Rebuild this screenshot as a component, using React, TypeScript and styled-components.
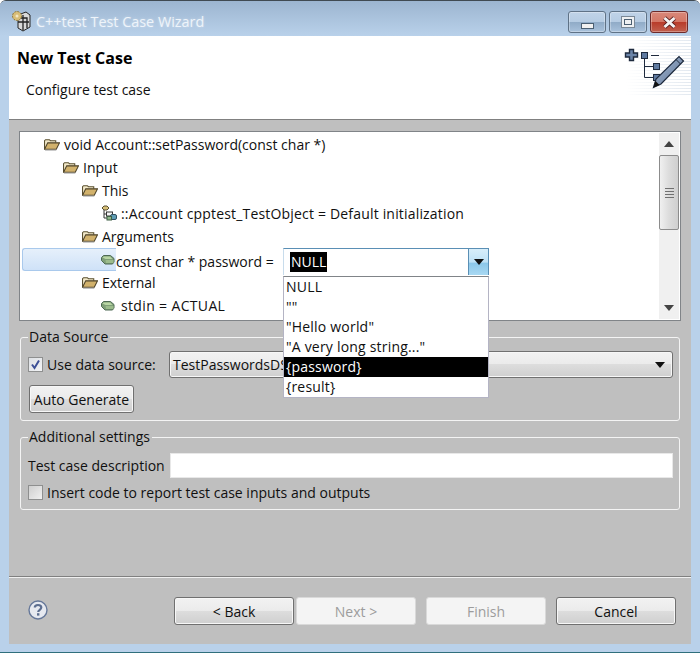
import styled, { createGlobalStyle } from "styled-components";

const GlobalStyle = createGlobalStyle`
  html, body {
    margin: 0;
    padding: 0;
    background: #fff;
  }
  * {
    box-sizing: border-box;
  }
`;

const font = `"Open Sans", "Noto Sans", sans-serif`;

const Window = styled.div`
  width: 700px;
  height: 653px;
  display: flex;
  flex-direction: column;
  background: #b9d1ea;
  border-top: 1px solid #404a52;
  border-bottom: 1px solid #2f6f7c;
  border-radius: 6px 6px 0 0;
  font-family: ${font};
  font-size: 14px;
  color: #101010;
  overflow: hidden;
`;

const TitleBar = styled.div`
  height: 35px;
  flex: none;
  display: flex;
  align-items: center;
  padding: 5px 12px 0 11px;
  gap: 5px;
  background: linear-gradient(#9cb5d0, #b9d1ea);
`;

const TitleText = styled.span`
  flex: 1;
  font-size: 14.4px;
  color: #eef4fa;
  text-shadow: 0 0 3px rgba(255, 255, 255, 0.4);
`;

const WindowControls = styled.div`
  display: flex;
  gap: 3px;
  margin-top: 5px;
  align-self: flex-start;
`;

const ControlButton = styled.div<{ $close?: boolean }>`
  width: 38px;
  height: 22px;
  display: flex;
  align-items: center;
  justify-content: center;
  border: 1px solid ${(p) => (p.$close ? "#6e2a2a" : "#5f7286")};
  border-radius: 3px;
  box-shadow: inset 0 0 0 1px rgba(255, 255, 255, 0.3);
  background: ${(p) =>
    p.$close
      ? "linear-gradient(#d9887a 0%, #d47766 48%, #b93c2b 52%, #c1604e 100%)"
      : "linear-gradient(#c0d3e8 0%, #b6cce3 48%, #90abc7 52%, #a9c2dc 100%)"};
`;

const MinimizeGlyph = styled.div`
  width: 13px;
  height: 6px;
  margin-top: 7px;
  background: #f1f1f1;
  border: 1px solid #4b5f72;
`;

const MaximizeGlyph = styled.div`
  width: 14px;
  height: 12px;
  background: #eef0f2;
  border: 1px solid #7a8896;
  display: flex;
  align-items: center;
  justify-content: center;
  &::after {
    content: "";
    width: 6px;
    height: 4px;
    background: #eef0f2;
    border: 1px solid #4b5f72;
  }
`;

const Content = styled.div`
  flex: 1;
  margin: 0 9px 8px 9px;
  display: flex;
  flex-direction: column;
  background: #bfbfbf;
`;

const Header = styled.div`
  height: 84px;
  flex: none;
  display: flex;
  justify-content: space-between;
  background: #fff;
  border-bottom: 1px solid #808080;
`;

const HeaderText = styled.div`
  padding: 11px 0 0 8px;
`;

const HeaderTitle = styled.div`
  font-size: 16px;
  font-weight: 700;
  line-height: 22px;
  color: #000;
`;

const HeaderSubtitle = styled.div`
  margin: 10px 0 0 9px;
  font-size: 14px;
  line-height: 22px;
`;

const Body = styled.div`
  flex: 1;
  display: flex;
  flex-direction: column;
  padding: 11px 10px 0 10px;
`;

const TreePanel = styled.div`
  height: 190px;
  flex: none;
  display: flex;
  background: #fff;
  border: 1px solid #808488;
`;

const Tree = styled.div`
  flex: 1;
  padding-top: 1px;
`;

const TreeRow = styled.div<{ $depth: number; $tracking?: number; $gap?: number }>`
  height: 23px;
  display: flex;
  align-items: center;
  gap: ${(p) => p.$gap ?? 4}px;
  padding-left: ${(p) => 24 + p.$depth * 19}px;
  letter-spacing: ${(p) => p.$tracking ?? 0}px;
  white-space: nowrap;
`;

const EditRow = styled.div`
  height: 23px;
  display: flex;
  align-items: flex-start;
  white-space: nowrap;
`;

const SelectedCell = styled.div`
  width: 94px;
  height: 23px;
  margin-left: 2px;
  display: flex;
  justify-content: flex-end;
  align-items: flex-start;
  padding: 6px 1px 0 0;
  border: 1px solid #a9c9ec;
  border-right: 0;
  border-radius: 3px 0 0 3px;
  background: linear-gradient(#e6f0fb, #cfe2f8);
`;

const EditLabel = styled.span`
  width: 167px;
  line-height: 27px;
`;

const Combo = styled.div`
  position: relative;
  width: 206px;
  height: 27px;
  display: flex;
  align-items: center;
  justify-content: space-between;
  background: #fff;
  border-top: 1px solid #5a8fb5;
  border-left: 1px solid #c8dcec;
  border-right: 1px solid #5a8fb5;
  padding-left: 6px;
`;

const ComboValue = styled.span`
  background: #000;
  color: #fff;
  padding: 0 1px;
  line-height: 20px;
`;

const ComboArrow = styled.div`
  width: 20px;
  height: 26px;
  display: flex;
  align-items: center;
  justify-content: center;
  background: linear-gradient(#d8eefa 0%, #bfe2f6 50%, #8cc8ea 55%, #a8d8f2 100%);
  border-left: 1px solid #5a8fb5;
`;

const Popup = styled.div`
  position: absolute;
  left: -1px;
  top: 27px;
  width: 206px;
  height: 122px;
  background: #fff;
  border: 1px solid #b4b4c4;
  border-top-color: #808488;
  z-index: 5;
  letter-spacing: 0.2px;
`;

const PopupItem = styled.div<{ $selected?: boolean }>`
  height: 20px;
  line-height: 20px;
  padding-left: 2px;
  background: ${(p) => (p.$selected ? "#000" : "transparent")};
  color: ${(p) => (p.$selected ? "#fff" : "#101010")};
`;

const Scrollbar = styled.div`
  width: 20px;
  margin: 1px 1px 1px 0;
  display: flex;
  flex-direction: column;
  background: #f0f0f0;
`;

const ScrollArrow = styled.div`
  height: 22px;
  display: flex;
  align-items: center;
  justify-content: center;
`;

const ScrollThumb = styled.div`
  height: 75px;
  display: flex;
  flex-direction: column;
  gap: 2px;
  align-items: center;
  justify-content: center;
  border: 1px solid #8c8c8c;
  border-radius: 2px;
  background: linear-gradient(90deg, #f0f0f0, #dcdcdc 50%, #cfcfcf);
`;

const Grip = styled.div`
  width: 9px;
  height: 1px;
  background: #707070;
`;

const ScrollSpacer = styled.div`
  flex: 1;
`;

const Group = styled.fieldset<{ $height: number; $pad: number }>`
  margin: 7px 0 0 1px;
  width: 660px;
  height: ${(p) => p.$height}px;
  padding: ${(p) => p.$pad}px 6px 0 7px;
  border: 1px solid #f4f4f4;
  border-radius: 3px;
  min-width: 0;
`;

const GroupTitle = styled.legend`
  padding: 0 2px 0 1px;
  margin-left: 0;
  line-height: 18px;
  font-size: 14px;
`;

const FormRow = styled.div`
  display: flex;
  align-items: center;
`;

const CheckBox = styled.div<{ $checked?: boolean }>`
  width: 15px;
  height: 15px;
  flex: none;
  display: flex;
  align-items: center;
  justify-content: center;
  border: 1px solid #8e8f8f;
  background: ${(p) =>
    p.$checked ? "linear-gradient(135deg, #dde0e4, #f2f3f5)" : "linear-gradient(135deg, #cfcfcf, #f0f0f0)"};
`;

const CheckLabel = styled.span<{ $width?: number }>`
  margin-left: 4px;
  width: ${(p) => (p.$width ? `${p.$width}px` : "auto")};
`;

const DropList = styled.div`
  flex: 1;
  height: 27px;
  display: flex;
  align-items: center;
  justify-content: space-between;
  padding: 0 7px 0 3px;
  border: 1px solid #707070;
  border-radius: 3px;
  box-shadow: inset 0 0 0 1px #f7f7f7;
  background: linear-gradient(#f2f2f2 0%, #ebebeb 48%, #dddddd 50%, #cfcfcf 100%);
`;

const Button = styled.button<{ $width: number; $disabled?: boolean }>`
  width: ${(p) => p.$width}px;
  height: 28px;
  padding: 0;
  font: inherit;
  border-radius: 3px;
  color: ${(p) => (p.$disabled ? "#9c9c9c" : "#101010")};
  border: 1px solid ${(p) => (p.$disabled ? "#d9d9d9" : "#707070")};
  box-shadow: ${(p) => (p.$disabled ? "none" : "inset 0 0 0 1px #f7f7f7")};
  background: ${(p) =>
    p.$disabled
      ? "#f4f4f4"
      : "linear-gradient(#f2f2f2 0%, #ebebeb 48%, #dddddd 50%, #cfcfcf 100%)"};
`;

const AutoButtonRow = styled.div`
  margin: 7px 0 0 1px;
`;

const DescLabel = styled.span`
  width: 142px;
  flex: none;
`;

const TextField = styled.div`
  flex: 1;
  height: 25px;
  background: #fff;
  border: 1px solid #e8e8e8;
`;

const InsertRow = styled(FormRow)`
  margin-top: 5px;
`;

const Grow = styled.div`
  flex: 1;
`;

const FooterRule = styled.div`
  height: 2px;
  flex: none;
  background: #808080;
  border-bottom: 1px solid #f0f0f0;
`;

const Footer = styled.div`
  height: 66px;
  flex: none;
  display: flex;
  align-items: flex-start;
  padding: 19px 15px 0 19px;
`;

const HelpIcon = styled.svg`
  width: 20px;
  height: 20px;
  margin-top: 3px;
`;

const FooterButtons = styled.div`
  margin-left: auto;
  display: flex;
`;

const ButtonGap = styled.div<{ $width: number }>`
  width: ${(p) => p.$width}px;
`;

function Folder() {
  return (
    <svg width="16" height="14" viewBox="1 1.5 15 12">
      <path d="M1.5 11.5V3.5L2.5 2.5H6L7 3.5H12V5.5" fill="#f2e8c8" stroke="#5a5030" />
      <path d="M1.5 11.5L4.5 5.5H15.5L12.5 11.5Z" fill="#d2b26c" stroke="#4c4228" />
      <path d="M2 12.5H12.5" stroke="#b8b8b8" />
    </svg>
  );
}

function Block() {
  return (
    <svg width="14" height="10" viewBox="0 0 14 10">
      <path d="M0.5 2.5L2.5 0.5H9.5L13 3.5V7L11.5 9H4L0.5 5.5Z" fill="#7f9f78" stroke="#4e6a55" />
      <path d="M1.5 2.5L3 1.5H9L11.5 4H4.5Z" fill="#b9d6a4" />
      <path d="M4.5 5H12.5V8H5Z" fill="#9cbc8c" />
    </svg>
  );
}

function ClassIcon() {
  return (
    <svg width="17" height="17" viewBox="0 0 17 17">
      <path d="M1 3L3 1H6L8 3L6 5H3Z" fill="#d8c078" stroke="#5a5030" />
      <path d="M3 5V13H7M3 9H6" fill="none" stroke="#333" />
      <rect x="5.5" y="7" width="6" height="4" fill="#f5f5f5" stroke="#333" />
      <rect x="9.5" y="9.5" width="6" height="5" rx="1.5" fill="#5e9cb4" stroke="#2f4f5f" />
      <rect x="6" y="11.5" width="4.5" height="3.5" fill="#8fb88a" stroke="#3f5f45" />
    </svg>
  );
}

function AppIcon() {
  return (
    <svg width="20" height="22" viewBox="0 0 20 22">
      <path d="M7 5L15 2L19 5V17L12 21L7 18Z" fill="#d8d8d8" stroke="#222" />
      <path d="M9 8H16V18M12 5V20M7 12H18" fill="none" stroke="#222" strokeWidth="1.3" />
      <circle cx="6" cy="6" r="4.5" fill="#d8bd78" stroke="#8c7538" strokeDasharray="2 1" />
      <circle cx="6" cy="6" r="1.5" fill="#f3e7c4" />
    </svg>
  );
}

function WizardIcon() {
  const stripes = [];
  for (let y = 1; y < 60; y += 3) {
    stripes.push(<rect key={y} x="6" y={y} width="65" height="1" fill="url(#fade)" />);
  }
  return (
    <svg width="71" height="83" viewBox="0 0 71 83">
      <defs>
        <linearGradient id="fade" x1="0" x2="1" y1="0" y2="0">
          <stop offset="0" stopColor="#dfe6ee" stopOpacity="0" />
          <stop offset="1" stopColor="#dfe6ee" stopOpacity="0.9" />
        </linearGradient>
        <linearGradient id="pen" x1="0" x2="1" y1="0" y2="1">
          <stop offset="0" stopColor="#a8bad2" />
          <stop offset="1" stopColor="#5a7296" />
        </linearGradient>
      </defs>
      {stripes}
      <path
        d="M5.5 17H9.5V13.5H13.5V17H17.5V21H13.5V24.5H9.5V21H5.5Z"
        fill="#6b84a8"
        stroke="#1e2a3e"
        strokeWidth="1.4"
      />
      <rect x="21.5" y="16.5" width="6" height="6" fill="#5f7aa0" stroke="#1e2a3e" />
      <path d="M31 19.5H39" stroke="#1e2a3e" strokeWidth="1.2" />
      <path d="M24.5 22.5V41.5H33M24.5 30.5H33" fill="none" stroke="#1e2a3e" />
      <rect x="33.5" y="27.5" width="6" height="6" fill="#5f7aa0" stroke="#1e2a3e" />
      <rect x="33.5" y="38.5" width="6" height="6" fill="#5f7aa0" stroke="#1e2a3e" />
      <path d="M33.5 51.5L36 43L59 20.5L63.5 25L41 48Z" fill="url(#pen)" stroke="#1e2a3e" strokeWidth="1.2" />
      <path d="M33.5 51.5L35.5 45L39.5 49Z" fill="#111" />
      <path d="M56 23.5L60.5 28" stroke="#1e2a3e" />
    </svg>
  );
}

function Triangle({ up, color = "#111", w = 10 }: { up?: boolean; color?: string; w?: number }) {
  return (
    <svg width={w} height={w / 2 + 1} viewBox="0 0 10 6">
      <path d={up ? "M5 0L10 6H0Z" : "M0 0H10L5 6Z"} fill={color} />
    </svg>
  );
}

export default function App() {
  return (
    <>
      <GlobalStyle />
      <Window>
        <TitleBar>
          <AppIcon />
          <TitleText>C++test Test Case Wizard</TitleText>
          <WindowControls>
            <ControlButton>
              <MinimizeGlyph />
            </ControlButton>
            <ControlButton>
              <MaximizeGlyph />
            </ControlButton>
            <ControlButton $close>
              <svg width="15" height="13" viewBox="0 0 15 13">
                <path d="M2.5 2L12.5 11M12.5 2L2.5 11" stroke="#5c2020" strokeWidth="4.4" />
                <path d="M2.5 2L12.5 11M12.5 2L2.5 11" stroke="#f4f4f4" strokeWidth="3" />
              </svg>
            </ControlButton>
          </WindowControls>
        </TitleBar>
        <Content>
          <Header>
            <HeaderText>
              <HeaderTitle>New Test Case</HeaderTitle>
              <HeaderSubtitle>Configure test case</HeaderSubtitle>
            </HeaderText>
            <WizardIcon />
          </Header>
          <Body>
            <TreePanel>
              <Tree>
                <TreeRow $depth={0}>
                  <Folder />
                  void Account::setPassword(const char *)
                </TreeRow>
                <TreeRow $depth={1}>
                  <Folder />
                  Input
                </TreeRow>
                <TreeRow $depth={2}>
                  <Folder />
                  This
                </TreeRow>
                <TreeRow $depth={3} $tracking={0.18} $gap={3}>
                  <ClassIcon />
                  ::Account cpptest_TestObject = Default initialization
                </TreeRow>
                <TreeRow $depth={2}>
                  <Folder />
                  Arguments
                </TreeRow>
                <EditRow>
                  <SelectedCell>
                    <Block />
                  </SelectedCell>
                  <EditLabel>const char * password =</EditLabel>
                  <Combo>
                    <ComboValue>NULL</ComboValue>
                    <ComboArrow>
                      <Triangle />
                    </ComboArrow>
                    <Popup>
                      <PopupItem>NULL</PopupItem>
                      <PopupItem>""</PopupItem>
                      <PopupItem>"Hello world"</PopupItem>
                      <PopupItem>"A very long string..."</PopupItem>
                      <PopupItem $selected>{"{password}"}</PopupItem>
                      <PopupItem>{"{result}"}</PopupItem>
                    </Popup>
                  </Combo>
                </EditRow>
                <TreeRow $depth={2}>
                  <Folder />
                  External
                </TreeRow>
                <TreeRow $depth={3} $tracking={0.35} $gap={6}>
                  <Block />
                  stdin = ACTUAL
                </TreeRow>
              </Tree>
              <Scrollbar>
                <ScrollArrow>
                  <Triangle up color="#444" />
                </ScrollArrow>
                <ScrollThumb>
                  <Grip />
                  <Grip />
                  <Grip />
                  <Grip />
                </ScrollThumb>
                <ScrollSpacer />
                <ScrollArrow>
                  <Triangle color="#444" />
                </ScrollArrow>
              </Scrollbar>
            </TreePanel>
            <Group $height={93} $pad={5}>
              <GroupTitle>Data Source</GroupTitle>
              <FormRow>
                <CheckBox $checked>
                  <svg width="11" height="11" viewBox="0 0 11 11">
                    <path d="M2 5.5L4.5 9L9 1.5" fill="none" stroke="#3c4f96" strokeWidth="2" />
                  </svg>
                </CheckBox>
                <CheckLabel $width={122}>Use data source:</CheckLabel>
                <DropList>
                  TestPasswordsDS
                  <Triangle />
                </DropList>
              </FormRow>
              <AutoButtonRow>
                <Button $width={105}>Auto Generate</Button>
              </AutoButtonRow>
            </Group>
            <Group $height={82} $pad={7}>
              <GroupTitle>Additional settings</GroupTitle>
              <FormRow>
                <DescLabel>Test case description</DescLabel>
                <TextField />
              </FormRow>
              <InsertRow>
                <CheckBox />
                <CheckLabel>Insert code to report test case inputs and outputs</CheckLabel>
              </InsertRow>
            </Group>
            <Grow />
          </Body>
          <FooterRule />
          <Footer>
            <HelpIcon viewBox="0 0 20 20">
              <circle cx="10" cy="10" r="9" fill="#e6e9f0" stroke="#66789a" strokeWidth="1.4" />
              <path
                d="M6.8 7.6C6.8 5.8 8.2 5 10 5C12 5 13.3 6 13.3 7.6C13.3 9.8 10.2 9.8 10.2 12"
                fill="none"
                stroke="#5c6e90"
                strokeWidth="2.2"
              />
              <rect x="9" y="13.2" width="2.4" height="2.4" fill="#5c6e90" />
            </HelpIcon>
            <FooterButtons>
              <Button $width={120}>&lt; Back</Button>
              <ButtonGap $width={2} />
              <Button $width={120} $disabled>
                Next &gt;
              </Button>
              <ButtonGap $width={10} />
              <Button $width={120} $disabled>
                Finish
              </Button>
              <ButtonGap $width={10} />
              <Button $width={120}>Cancel</Button>
            </FooterButtons>
          </Footer>
        </Content>
      </Window>
    </>
  );
}
